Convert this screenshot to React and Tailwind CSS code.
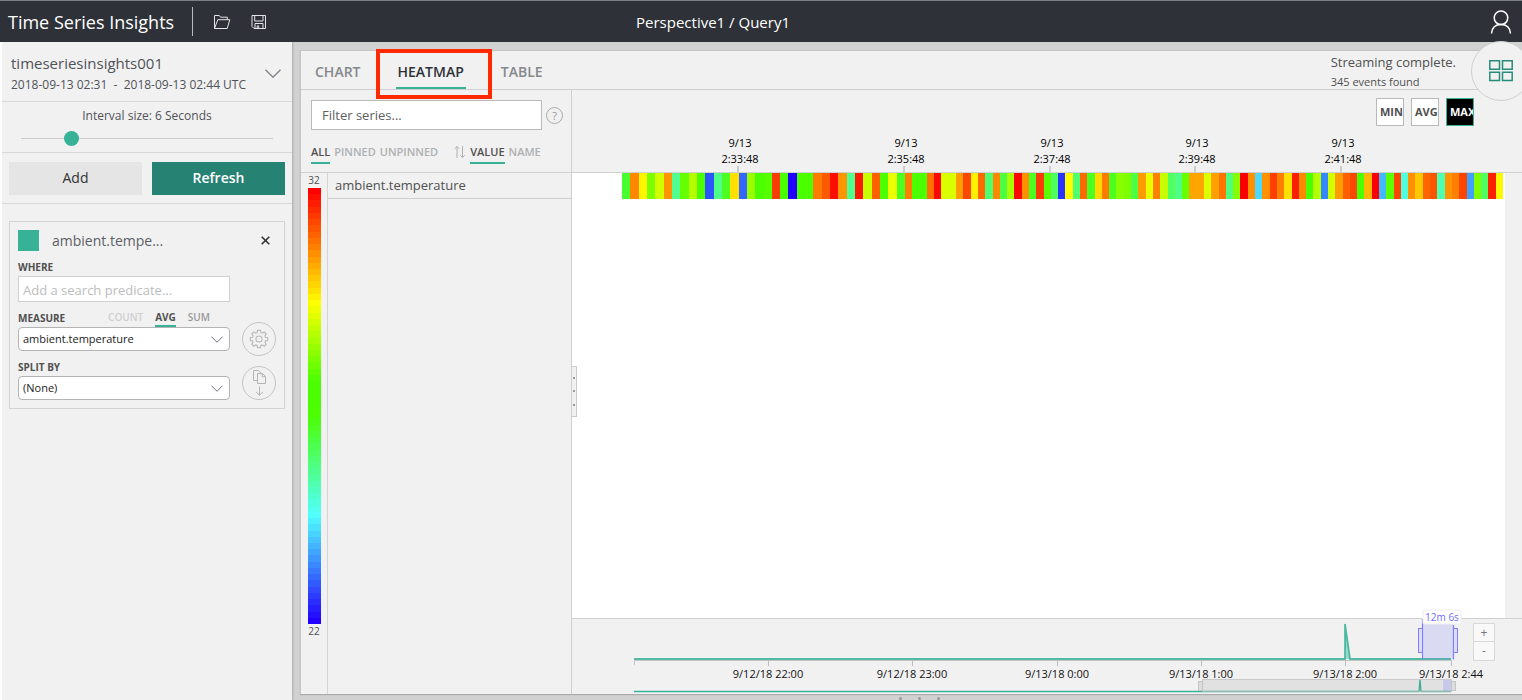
import React from "react";

const EARLY = "48ff30 ff8800 fff600 7dff00 d0ff00 ff9500 50ff90 66ff00 b4ff00 4cff00 2b55ff 50ff8a 4cff20 ffe000 3366ff 99ff00 4cff00 55ff00 f93c00 4cff00 2200ff 4cff00 4cff00 ff7a00 fb5a00 fb1000 ff9500 50ff90 fb1a00 c8ff00 ff6000 4cff00 ecff00 4cff20".split(" ");
const LATE = "ff8000 4cff00 4cff00 ff7000 fb0800 dcff00 d8ff00 ff9d00 fb4800 fff000 ff6a00 50ff70 ff8800 4cff40 a8ff00 fb0800 ff9000 4cff20 fb3c00 5cff00 50ff60 2a33ff ffff00 50ff70 ff6a00 4cff20 ffd800 ff7a00 4cff20 88ff00 7dff00 4cff40 ff9d00 e8ff00 ff8000 c8ff00 50ff60 50ff88 66ff00 ffa500 ffa500 dcff00 ffa000 ff7500 50ff80 88ff00 fb0000 ff9000 4cd8ff ff9000 fb4000 ff8000 ffe000 fb2000 ff8a00 4cff00 b4ff00 3388ff d0ff00 ff9d00 ff6000 fb4800 4cff00 ffb800 fb0000 44b8ff 5cff00 fb4800 50ffe0 ff9000 ffc800 ff6600 fb5500 50ffb0 ff9500 ff8000 fb4500 40a0ff 80ff00 50ff60 fb2000 fff800".split(" ");
const SPLIT_X = 333;
const cells = [
  ...EARLY.map((c, i) => ({ c, x: 50 + (i * 283) / EARLY.length, w: 283 / EARLY.length })),
  ...LATE.map((c, i) => ({ c, x: SPLIT_X + (i * 598) / LATE.length, w: 598 / LATE.length })),
];

const STOPS = [
  [0, 255, 0, 0],
  [0.26, 255, 255, 0],
  [0.44, 76, 255, 0],
  [0.52, 76, 255, 0],
  [0.755, 80, 255, 255],
  [1, 34, 0, 255],
];
function scaleColor(t) {
  const i = Math.max(1, STOPS.findIndex((s) => s[0] >= t));
  const a = STOPS[i - 1];
  const b = STOPS[i];
  const k = (t - a[0]) / (b[0] - a[0]);
  return `rgb(${[1, 2, 3].map((n) => Math.round(a[n] + (b[n] - a[n]) * k)).join(",")})`;
}
const BANDS = 70;

const TICKS = [
  ["2:33:48", 166],
  ["2:35:48", 332],
  ["2:37:48", 478],
  ["2:39:48", 623],
  ["2:41:48", 769],
];

const HOURS = [
  ["9/12/18 22:00", 196],
  ["9/12/18 23:00", 340],
  ["9/13/18 0:00", 485],
  ["9/13/18 1:00", 629],
  ["9/13/18 2:00", 773],
  ["9/13/18 2:44", 879],
];

function Chevron({ className }) {
  return (
    <svg className={className} viewBox="0 0 16 9" fill="none" stroke="currentColor" aria-hidden="true">
      <path d="M.5.7 8 8.200 15.500.7" strokeWidth="1.300" />
    </svg>
  );
}

function Header() {
  return (
    <header className="relative flex h-[42px] items-center justify-between border-t border-[#7c8082] bg-[#2e3138] pl-2 pr-2.5 text-white">
      <div className="flex flex-1 items-center">
        <h1 className="text-lg leading-6">Time Series Insights</h1>
        <div className="mx-[18px] h-[29px] w-px bg-[#b8babd]" />
        <button aria-label="Open" className="ml-0.5 mr-5">
          <svg width="18" height="16" viewBox="0 0 18 16" fill="none" stroke="#e4e4e6">
            <path d="M1.500 14.500V1.500h4.800l1.200 1.700h6.800v2.500M1.500 14.500 4.800 5.700h12l-2.600 8.800z" />
          </svg>
        </button>
        <button aria-label="Save">
          <svg width="16" height="16" viewBox="0 0 16 16" fill="none" stroke="#e4e4e6">
            <path d="M1 1.500h13.500v13H3L1 12.500zM3.700 1.500v5.500h8.300v-5.500M4 14.500V9.500h8v5M6.200 14.500v-2.600h1.500v2.600" />
          </svg>
        </button>
      </div>
      <div className="text-[15px] leading-5">Perspective1 / Query1</div>
      <div className="flex flex-1 justify-end pl-[94px]">
        <button aria-label="Account">
          <svg width="22" height="24" viewBox="0 0 22 24" fill="none" stroke="#fff" strokeWidth="1.500">
            <circle cx="11" cy="7.800" r="6.800" />
            <path d="M1.500 23.500C2 18 5.500 14.600 11 14.600s9 3.400 9.500 8.900" />
          </svg>
        </button>
      </div>
    </header>
  );
}

const label = "text-[10px] font-bold leading-4 text-[#505050]";
const select = "block h-6 w-full appearance-none rounded border border-[#b4b4b4] bg-white pl-1 pr-7 text-[11px] leading-4 text-[#222]";

function SelectBox({ id, value }) {
  return (
    <div className="relative">
      <select id={id} className={select} defaultValue={value}>
        <option>{value}</option>
      </select>
      <Chevron className="pointer-events-none absolute right-[7px] top-[9px] h-[7px] w-3 text-[#6b7078]" />
    </div>
  );
}

function TermCard() {
  return (
    <section className="mx-[7px] mt-[17px] border border-[#d4d4d4] p-2">
      <div className="flex items-center">
        <span className="size-[21px] bg-[#37b296]" />
        <span className="ml-[13px] flex-1 text-sm leading-[21px] text-[#5c5f66]">ambient.tempe...</span>
        <button aria-label="Remove" className="mr-1.5 text-[#333]">
          <svg width="9" height="9" viewBox="0 0 9 9" stroke="currentColor" strokeWidth="1.600">
            <path d="M.7.7l7.600 7.600M8.300.7.7 8.300" />
          </svg>
        </button>
      </div>
      <div className="flex gap-3">
        <div className="w-[212px]">
          <label htmlFor="where" className={`mt-2 block ${label}`}>WHERE</label>
          <input id="where" placeholder="Add a search predicate..." className="mt-px block h-[26px] w-full border border-[#d0d0d0] bg-white px-1 pt-0.5 text-[13px] placeholder:text-[#bcbcbc]" />
          <div className="mt-2 flex items-start">
            <label htmlFor="measure" className={label}>MEASURE</label>
            <div className="ml-auto mr-5 flex gap-3 text-[10px] font-semibold leading-[15px]">
              <button className="border-b-2 border-transparent text-[#cfcfcf]">COUNT</button>
              <button className="border-b-2 border-[#37b296] font-bold text-[#505050]">AVG</button>
              <button className="border-b-2 border-transparent text-[#999]">SUM</button>
            </div>
          </div>
          <SelectBox id="measure" value="ambient.temperature" />
          <label htmlFor="split" className={`mb-px mt-2 block ${label}`}>SPLIT BY</label>
          <SelectBox id="split" value="(None)" />
        </div>
        <div className="flex flex-col justify-end gap-2.5">
          <button aria-label="Measure settings" className="flex size-[34px] items-center justify-center rounded-full border border-[#c4c4c4] text-[#b4b4b4]">
            <svg width="20" height="20" viewBox="0 0 22 23" fill="none" stroke="currentColor" strokeWidth="1.200">
              <path d="M9.300 1.500h3.400l.5 2.700 1.500.6 2.300-1.500 2.300 2.300-1.500 2.300.6 1.500 2.600.5v3.300l-2.600.5-.6 1.500 1.500 2.300-2.300 2.300-2.300-1.500-1.500.6-.5 2.600H9.300l-.5-2.600-1.500-.6L5 19.800l-2.300-2.300 1.500-2.300-.6-1.500-2.600-.5V9.900l2.600-.5.6-1.500-1.500-2.300L5 3.300l2.300 1.500 1.500-.6z" />
              <circle cx="11" cy="11.500" r="3.500" />
            </svg>
          </button>
          <button aria-label="Duplicate term" className="flex size-[34px] items-center justify-center rounded-full border border-[#c4c4c4] text-[#b4b4b4]">
            <svg width="16" height="28" viewBox="0 0 16 28" fill="none" stroke="currentColor">
              <path d="M6 11.500H2.500v-10h4.800l3 3M6.500 4.500h5l3 3v7h-8zM11.300 4.700v3h3M8.500 17.500v8.500M5.200 23l3.300 3.300 3.300-3.300" />
            </svg>
          </button>
        </div>
      </div>
    </section>
  );
}

function Sidebar() {
  return (
    <aside className="w-[292px] shrink-0 border-l-2 border-white bg-[#f1f1f1] shadow-[1px_0_2px_#aaa]">
      <div className="flex h-[60px] items-center border-b border-[#d8d8d8] pl-[9px] pr-[11px] pt-1 text-[#505258]">
        <div className="flex-1">
          <div className="text-[15px] leading-[21px]">timeseriesinsights001</div>
          <div className="whitespace-pre text-xs leading-[21px]">2018-09-13 02:31  -  2018-09-13 02:44 UTC</div>
        </div>
        <button aria-label="Change time range">
          <Chevron className="h-[9px] w-4 text-[#7d8087]" />
        </button>
      </div>
      <div className="h-[51px] border-b border-[#d8d8d8] px-[19px] pt-1">
        <label htmlFor="interval" className="block text-center text-xs leading-5 text-[#505258]">Interval size: 6 Seconds</label>
        <input
          id="interval"
          type="range"
          min="0"
          max="100"
          defaultValue="18"
          className="mt-[5px] block h-[15px] w-full appearance-none bg-transparent [&::-webkit-slider-runnable-track]:h-px [&::-webkit-slider-runnable-track]:bg-[#ccc] [&::-webkit-slider-thumb]:-mt-[7px] [&::-webkit-slider-thumb]:size-[15px] [&::-webkit-slider-thumb]:appearance-none [&::-webkit-slider-thumb]:rounded-full [&::-webkit-slider-thumb]:bg-[#37b296]"
        />
      </div>
      <div className="grid h-[51px] grid-cols-2 items-center gap-2.5 border-b border-[#d8d8d8] px-[7px] text-sm">
        <button className="h-[33px] bg-[#e5e5e5] text-[#333]">Add</button>
        <button className="h-[33px] bg-[#268272] font-semibold text-white">Refresh</button>
      </div>
      <TermCard />
    </aside>
  );
}

function SeriesPane() {
  return (
    <div className="flex w-[271px] shrink-0 flex-col border-r border-[#cfcfcf]">
      <div className="h-[83px] border-b border-[#d0d0d0] pl-2.5 pt-2.5">
        <div className="flex items-center gap-1">
          <input aria-label="Filter series" placeholder="Filter series..." className="h-[30px] w-[231px] border border-[#b9b9b9] bg-white px-2.5 text-[13px] placeholder:text-[#606060]" />
          <button aria-label="Help" className="size-[17px] rounded-full border border-[#aaa] text-[11px] leading-[15px] text-[#999]">?</button>
        </div>
        <div className="mt-3.5 flex gap-1 text-[11px] font-semibold leading-4 text-[#aeb0b2]">
          <button className="border-b-2 border-[#37b296] pb-0.5 text-[#505050]">ALL</button>
          <button className="border-b-2 border-transparent pb-0.5">PINNED</button>
          <button className="border-b-2 border-transparent pb-0.5">UNPINNED</button>
          <svg width="12" height="14" viewBox="0 0 12 14" fill="none" stroke="#aeb0b2" className="ml-3 mt-px" aria-hidden="true">
            <path d="M3 13V1.500M.7 3.800 3 1.500l2.300 2.300M8.500 1v11.500M6.200 10.200l2.300 2.300 2.300-2.300" />
          </svg>
          <button className="border-b-2 border-[#37b296] pb-0.5 text-[#505050]">VALUE</button>
          <button className="border-b-2 border-transparent pb-0.5">NAME</button>
        </div>
      </div>
      <div className="flex flex-1">
        <div className="flex w-[27px] flex-col items-center border-r border-[#d4d4d4] text-[10px] leading-[15px] text-[#505050]">
          <span>32</span>
          <svg width="13" height="436" viewBox="0 0 13 436" shapeRendering="crispEdges" role="img" aria-label="Color scale">
            {Array.from({ length: BANDS }, (_, i) => (
              <rect key={i} y={(i * 436) / BANDS} width="13" height={436 / BANDS + 0.5} fill={scaleColor(i / (BANDS - 1))} />
            ))}
          </svg>
          <span>22</span>
        </div>
        <div className="flex-1">
          <div className="border-b border-[#d0d0d0] px-[7px] text-[13px] leading-[25px] text-[#505050]">ambient.temperature</div>
        </div>
      </div>
    </div>
  );
}

function Timeline() {
  return (
    <div className="relative border-t border-[#d0d0d0]">
      <svg viewBox="0 0 950 75" className="block w-full overflow-visible" role="img" aria-label="Availability">
        <path d="M62.500 46v-4.500H879.500V46" fill="none" stroke="#c4c4c4" />
        {HOURS.map(([, x]) => (
          <path key={x} d={`M${x + 0.5} 42v5`} stroke="#bdbdbd" />
        ))}
        <path d="M62 40H773V5l5 35H879" fill="#9fd9ca" stroke="#37b296" strokeWidth="1.800" strokeOpacity=".85" />
        <rect x="850" y="0" width="31" height="40.500" fill="#8080ff" fillOpacity=".2" />
        <path d="M850.500 0v40.500M881.500 6v34.500" stroke="#8080ff" strokeWidth="1.200" />
        <rect x="846.500" y="9.500" width="4" height="24" fill="#dcdcf4" stroke="#8080ff" />
        <rect x="881.500" y="9.500" width="4" height="24" fill="#dcdcf4" stroke="#8080ff" />
        <rect x="851" y="-9" width="38" height="14" rx="1" fill="#fff" stroke="#ebebf5" />
        <text x="870" y="2" textAnchor="middle" fill="#6e6eff" className="text-[10px]">12m 6s</text>
        {HOURS.map(([t, x]) => (
          <text key={t} x={x} y="59" textAnchor="middle" fill="#111" className="text-[11px]">{t}</text>
        ))}
        <path d="M62 72.500H847l1-12 1 12H879" fill="none" stroke="#37b296" strokeWidth="1.300" />
        <rect x="630.500" y="60.500" width="249" height="12" fill="#808080" fillOpacity=".14" stroke="#bbb" strokeOpacity=".7" />
        <rect x="626.500" y="62.500" width="4" height="9" fill="#ddd" stroke="#c4c4c4" />
        <rect x="879.500" y="62.500" width="4" height="9" fill="#ddd" stroke="#c4c4c4" />
        <rect x="871" y="61" width="8" height="11" fill="#8080ff" fillOpacity=".25" />
      </svg>
      <div className="absolute right-[27px] top-1 flex w-[22px] flex-col divide-y divide-[#d8d8d8] border border-[#d8d8d8] bg-[#f8f8f8] text-xs text-[#777]">
        <button aria-label="Zoom in" className="h-[18px] leading-4">+</button>
        <button aria-label="Zoom out" className="h-[18px] leading-4">-</button>
      </div>
    </div>
  );
}

function HeatPane() {
  const agg = "size-7 overflow-hidden whitespace-nowrap border pl-[3px] text-left text-[11px] font-bold leading-6";
  return (
    <div className="flex min-w-0 flex-1 flex-col">
      <div className="flex justify-end gap-[7px] pr-12 pt-2">
        <button className={`${agg} border-[#b9b9b9] bg-white text-[#505050]`}>MIN</button>
        <button className={`${agg} border-[#b9b9b9] bg-white text-[#505050]`}>AVG</button>
        <button className={`${agg} border-[#37b296] bg-black text-white`}>MAX</button>
      </div>
      <svg viewBox="0 0 950 46" className="block w-full border-b border-[#d0d0d0]" role="img" aria-label="Time axis">
        {TICKS.map(([t, x]) => (
          <g key={t} textAnchor="middle" className="text-[11px]">
            <text x={x + 2} y="21">9/13</text>
            <text x={x + 2} y="37">{t}</text>
            <path d={`M${x} 40v6`} stroke="#ccc" strokeWidth="2" />
          </g>
        ))}
      </svg>
      <div className="relative flex flex-1 flex-col bg-white">
        <div className="absolute inset-y-0 right-0 w-[17px] bg-[#f1f1f1]" />
        <svg viewBox="0 0 950 26" className="relative block w-full" shapeRendering="crispEdges" role="img" aria-label="Heatmap of ambient.temperature">
          {cells.map(({ c, x, w }) => (
            <rect key={x} x={x} width={w} height="26" fill={`#${c}`} />
          ))}
        </svg>
        <div className="absolute left-0 top-[193px] flex h-[51px] w-[5px] flex-col items-center justify-around border border-l-0 border-[#ccc] bg-[#f1f1f1] py-1">
          <span className="size-0.5 bg-[#999]" />
          <span className="size-0.5 bg-[#999]" />
          <span className="size-0.5 bg-[#999]" />
        </div>
      </div>
      <Timeline />
    </div>
  );
}

export default function App() {
  return (
    <div className="flex min-h-screen flex-col overflow-hidden bg-[#d1d1d1] font-['Open_Sans','Noto_Sans',sans-serif]">
      <Header />
      <div className="flex flex-1">
        <Sidebar />
        <main className="relative flex min-w-0 flex-1 flex-col pl-2 pt-2">
          <div className="flex flex-1 flex-col border-l border-t border-[#c4c4c4] bg-[#f1f1f1] shadow-[0_1px_1px_#aaa]">
            <div className="flex h-[39px] items-center justify-between border-b border-[#d0d0d0] pl-3.5 pr-[66px]">
              <nav className="flex h-full items-stretch gap-[35px] text-sm font-semibold leading-5 text-[#85888c]">
                <button className="border-b-2 border-transparent pt-1.5">CHART</button>
                <div className="relative flex">
                  <button className="border-b-2 border-[#37b296] px-0.5 pt-1.5 text-[#2e3138]">HEATMAP</button>
                  <div className="pointer-events-none absolute -bottom-2.5 -left-5 -right-[26px] -top-0.5 border-4 border-[#ff2a00]" />
                </div>
                <button className="border-b-2 border-transparent pt-1.5">TABLE</button>
              </nav>
              <div className="pt-1 text-[#505050]">
                <div className="text-[13px] leading-5">Streaming complete.</div>
                <div className="text-[11px] leading-5">345 events found</div>
              </div>
            </div>
            <div className="flex flex-1">
              <SeriesPane />
              <HeatPane />
            </div>
          </div>
          <div className="flex h-1.5 items-end justify-center gap-4 pl-4">
            <span className="size-[3px] rounded-full bg-[#999]" />
            <span className="size-[3px] rounded-full bg-[#999]" />
            <span className="size-[3px] rounded-full bg-[#999]" />
          </div>
          <button aria-label="Dashboard" className="absolute -right-[9px] -top-px flex size-[60px] items-center justify-center rounded-full border border-[#d0d0d0] bg-[#f1f1f1]">
            <svg width="24" height="22" viewBox="0 0 24 22" fill="none" stroke="#268c7a" strokeWidth="1.500">
              <path d="M.8.8h9.700v8.400H.8zM13.500.8h9.700v8.400h-9.700zM.8 12.200h9.700v8.400H.8zM13.500 12.200h9.700v8.400h-9.700z" />
            </svg>
          </button>
        </main>
      </div>
    </div>
  );
}
